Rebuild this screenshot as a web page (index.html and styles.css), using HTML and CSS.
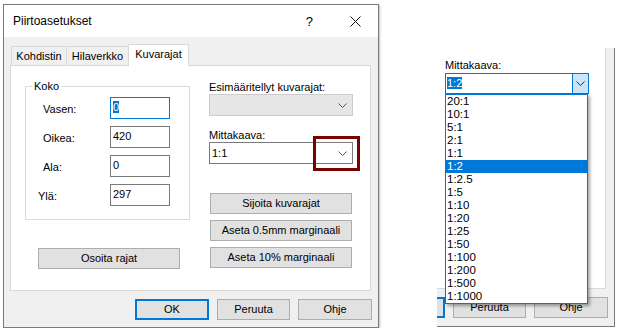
FILE: index.html
```html
<!DOCTYPE html>
<html lang="fi">
<head>
    <meta charset="UTF-8">
    <title>Piirtoasetukset</title>
    <link rel="stylesheet" href="styles.css">
</head>
<body>
<div class="page">
    <div class="dialog">
        <div class="titlebar">
            <span class="title">Piirtoasetukset</span>
            <span class="help">?</span>
            <svg class="close" width="11" height="11" viewBox="0 0 11 11"><path d="M0.5 0.5L10.5 10.5M10.5 0.5L0.5 10.5" stroke="#111" stroke-width="1"/></svg>
        </div>
        <div class="tabs">
            <div class="tab t1">Kohdistin</div>
            <div class="tab t2">Hilaverkko</div>
            <div class="tab t3 active">Kuvarajat</div>
        </div>
        <div class="panel">
            <div class="col-left">
                <div class="group">
                    <span class="legend">Koko</span>
                    <div class="row"><label>Vasen:</label><div class="field focus"><span class="sel">0</span></div></div>
                    <div class="row"><label>Oikea:</label><div class="field">420</div></div>
                    <div class="row"><label>Ala:</label><div class="field">0</div></div>
                    <div class="row"><label class="yla">Ylä:</label><div class="field">297</div></div>
                </div>
                <div class="btn osoita">Osoita rajat</div>
            </div>
            <div class="col-right">
                <div class="cap">Esimääritellyt kuvarajat:</div>
                <div class="combo disabled">
                    <svg class="chev" width="9" height="5" viewBox="0 0 9 5"><polyline points="0.5,0.5 4.5,4.5 8.5,0.5" fill="none" stroke="#555"/></svg>
                </div>
                <div class="cap second">Mittakaava:</div>
                <div class="combo">
                    <span class="value">1:1</span>
                    <svg class="chev" width="9" height="5" viewBox="0 0 9 5"><polyline points="0.5,0.5 4.5,4.5 8.5,0.5" fill="none" stroke="#555"/></svg>
                    <div class="mark"></div>
                </div>
                <div class="btn first">Sijoita kuvarajat</div>
                <div class="btn">Aseta 0.5mm marginaali</div>
                <div class="btn">Aseta 10% marginaali</div>
            </div>
        </div>
        <div class="buttons">
            <div class="btn ok">OK</div>
            <div class="btn cancel">Peruuta</div>
            <div class="btn helpbtn">Ohje</div>
        </div>
    </div>

    <div class="crop">
        <div class="crop-panel">
            <div class="cap">Mittakaava:</div>
            <div class="combo open">
                <span class="value"><span class="sel">1:2</span></span>
                <div class="drop">
                    <svg width="9" height="5" viewBox="0 0 9 5"><polyline points="0.5,0.5 4.5,4.5 8.5,0.5" fill="none" stroke="#333"/></svg>
                </div>
                <ul class="list">
                    <li>20:1</li>
                    <li>10:1</li>
                    <li>5:1</li>
                    <li>2:1</li>
                    <li>1:1</li>
                    <li class="selected">1:2</li>
                    <li>1:2.5</li>
                    <li>1:5</li>
                    <li>1:10</li>
                    <li>1:20</li>
                    <li>1:25</li>
                    <li>1:50</li>
                    <li>1:100</li>
                    <li>1:200</li>
                    <li>1:500</li>
                    <li>1:1000</li>
                </ul>
            </div>
        </div>
        <div class="crop-buttons">
            <div class="btn ok part"></div>
            <div class="btn cancel">Peruuta</div>
            <div class="btn helpbtn">Ohje</div>
        </div>
    </div>
</div>
</body>
</html>
```

FILE: styles.css
```css
* { margin: 0; padding: 0; box-sizing: border-box; }
body { background: #fff; font-family: "Liberation Sans", Arial, sans-serif; font-size: 11px; color: #000; }
.page { display: flex; align-items: flex-start; }

.dialog { margin: 4px 0 0 3px; width: 376px; height: 324px; background: #f0f0f0; border: 1px solid #7a7a7a; box-shadow: 1px 1px 2px rgba(0, 0, 0, 0.25); }
.titlebar { height: 32px; background: #fff; display: flex; align-items: center; padding-left: 9px; }
.title { font-size: 12px; }
.help { margin-left: auto; margin-right: 37px; font-size: 13px; }
.close { margin-right: 17px; }

.tabs { display: flex; align-items: flex-end; margin-top: 6px; padding-left: 7px; height: 22px; }
.tab { height: 19px; border: 1px solid #d9d9d9; border-bottom: none; background: #f0f0f0; text-align: center; line-height: 19px; margin-right: -1px; }
.tab.t1 { width: 56px; }
.tab.t2 { width: 63px; }
.tab.t3 { width: 61px; }
.tab.active { height: 22px; background: #fff; line-height: 18px; position: relative; z-index: 1; margin-bottom: -1px; }

.panel { margin-left: 6px; width: 361px; height: 226px; background: #fff; border: 1px solid #d9d9d9; display: flex; align-items: flex-start; }
.col-left { margin-left: 14px; width: 165px; }
.group { position: relative; margin-top: 20px; height: 134px; border: 1px solid #dcdcdc; padding-top: 10px; display: flex; flex-direction: column; gap: 7px; }
.legend { position: absolute; top: -8px; left: 6px; background: #fff; padding: 0 2px; line-height: 14px; }
.row { display: flex; align-items: center; height: 22px; }
.row label { width: 84px; padding-left: 17px; padding-top: 2px; }
.row label.yla { padding-left: 12px; }
.field { width: 60px; height: 22px; border: 1px solid #7a7a7a; padding: 2px 0 0 2px; line-height: 14px; }
.field.focus { border-color: #0078d7; }
.sel { background: #0078d7; color: #fff; }

.btn { height: 21px; background: #e1e1e1; border: 1px solid #adadad; text-align: center; line-height: 19px; }
.osoita { margin: 28px 0 0 13px; width: 142px; }

.col-right { margin-left: 19px; width: 144px; padding-top: 14px; display: flex; flex-direction: column; }
.cap { line-height: 14px; }
.cap.second { margin-top: 12px; }
.combo { position: relative; height: 22px; border: 1px solid #7a7a7a; background: #fff; display: flex; align-items: center; }
.combo.disabled { background: #e6e6e6; border-color: #cccccc; }
.combo .value { padding-left: 2px; }
.chev { margin-left: auto; margin-right: 5px; }
.mark { position: absolute; left: 103px; top: -7px; width: 47px; height: 35px; border: 3px solid #7b0000; }
.col-right .btn { margin-left: 1px; width: 142px; margin-top: 6px; }
.col-right .btn.first { margin-top: 29px; }

.buttons { display: flex; justify-content: flex-end; gap: 8px; margin-top: 8px; padding-right: 6px; }
.ok { width: 74px; border: 2px solid #0078d7; line-height: 17px; }
.cancel { width: 73px; }
.helpbtn { width: 74px; }

.crop { margin: 48px 0 0 58px; width: 178px; height: 279px; background: #f0f0f0; border-right: 1px solid #7a7a7a; border-bottom: 1px solid #7a7a7a; }
.crop-panel { width: 169px; height: 241px; background: #fff; border-right: 1px solid #d9d9d9; border-bottom: 1px solid #d9d9d9; padding: 10px 0 0 8px; }
.crop-panel .cap { margin-bottom: 1px; }
.combo.open { width: 144px; height: 21px; border-color: #0078d7; align-items: stretch; }
.combo.open .value { padding: 1px 0 1px 1px; line-height: 17px; }
.drop { margin-left: auto; width: 16px; background: #cce4f7; border-left: 1px solid #0078d7; display: flex; align-items: center; justify-content: center; }
.list { position: absolute; z-index: 2; left: -1px; top: calc(100% + 1px); width: 143px; list-style: none; background: #fff; border: 1px solid #0078d7; box-shadow: 2px 2px 3px rgba(0, 0, 0, 0.35); }
.list li { height: 13px; line-height: 13px; padding-left: 1px; font-size: 11.5px; }
.list li.selected { background: #0078d7; color: #fff; }

.crop-buttons { display: flex; gap: 8px; margin-top: 8px; }
.ok.part { width: 8px; border-left: none; }
```
